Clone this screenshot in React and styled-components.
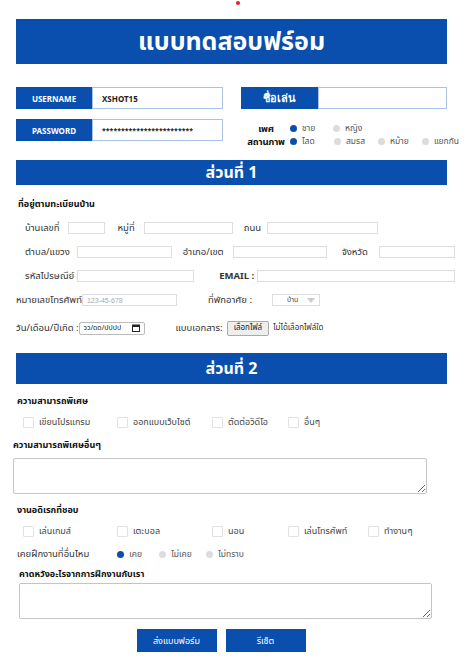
import React from 'react';
import styled, { createGlobalStyle } from 'styled-components';

const Global = createGlobalStyle`
  body {
    margin: 0;
    background: #fff;
    font-family: "Noto Sans Thai", "Noto Sans", "DejaVu Sans", sans-serif;
    color: #222;
  }
`;

const BLUE = '#0a4fae';

const Page = styled.div`
  width: 466px;
  padding: 1px 19px 0 16px;
  box-sizing: border-box;
  position: relative;
`;

const Dot = styled.span`
  position: absolute;
  left: 236px;
  top: 1px;
  width: 4px;
  height: 4px;
  border-radius: 50%;
  background: #d22;
`;

const Banner = styled.div`
  margin-top: ${({ $mt }) => $mt}px;
  height: ${({ $h }) => $h}px;
  background: ${BLUE};
  color: #fff;
  font-weight: 700;
  font-size: ${({ $fs }) => $fs}px;
  display: flex;
  align-items: center;
  justify-content: center;
`;

const Top = styled.div`
  display: grid;
  grid-template-columns: 207px 206px;
  column-gap: 18px;
  margin-top: 23px;
`;

const Col = styled.div`
  display: flex;
  flex-direction: column;
  gap: ${({ $gap }) => $gap}px;
`;

const Pair = styled.div`
  display: flex;
  height: 22px;
`;

const PairLabel = styled.div`
  width: ${({ $w }) => $w}px;
  flex: none;
  background: ${BLUE};
  color: #fff;
  font-family: "Noto Sans", sans-serif;
  font-weight: 700;
  font-size: ${({ $fs }) => $fs || 8}px;
  display: flex;
  align-items: center;
  justify-content: center;
`;

const PairInput = styled.div`
  flex: 1;
  border: 1px solid #a9c3e6;
  display: flex;
  align-items: center;
  padding-left: 9px;
  font-family: "Noto Sans", sans-serif;
  font-weight: 700;
  font-size: ${({ $fs }) => $fs || 8}px;
`;

const Choice = styled.div`
  display: flex;
  align-items: center;
  height: 13px;
  margin-top: ${({ $mt }) => $mt || 0}px;
`;

const ChoiceLabel = styled.div`
  width: 50px;
  flex: none;
  text-align: center;
  font-weight: 700;
  font-size: 9.5px;
  letter-spacing: -0.2px;
  color: #111;
`;

const RadioGroup = styled.div`
  display: flex;
  align-items: center;
  flex: none;
  margin-left: ${({ $ml }) => $ml || 0}px;
`;

const RadioItem = styled.div`
  display: flex;
  align-items: center;
  flex: none;
  gap: 5px;
  color: #555;
  font-size: 8.5px;
`;

const RadioDot = styled.span`
  width: 7px;
  height: 7px;
  border-radius: 50%;
  background: ${({ $on }) => ($on ? BLUE : '#dcdcdc')};
  flex: none;
`;

const Heading = styled.div`
  font-weight: 700;
  font-size: 9px;
  color: #111;
  margin: ${({ $m }) => $m};
`;

const Row = styled.div`
  display: flex;
  align-items: center;
  height: ${({ $h }) => $h || 24}px;
  padding-left: ${({ $pl }) => $pl || 0}px;
  box-sizing: border-box;
`;

const Label = styled.span`
  flex: none;
  margin-left: ${({ $ml }) => $ml || 0}px;
  font-size: 9.5px;
  color: #333;
  font-weight: ${({ $bold }) => ($bold ? 700 : 400)};
  white-space: nowrap;
`;

const Field = styled.div`
  flex: none;
  margin-left: ${({ $ml }) => $ml || 0}px;
  width: ${({ $w }) => $w}px;
  height: 12px;
  border: 1px solid #dedede;
  box-sizing: border-box;
  font-family: "Liberation Sans", sans-serif;
  font-size: 7px;
  color: #aaa;
  display: flex;
  align-items: center;
  padding-left: 4px;
`;

const Select = styled(Field)`
  justify-content: space-between;
  padding: 0 4px 0 14px;
  color: #444;
  font-family: inherit;
  &::after {
    content: '';
    border-left: 4px solid transparent;
    border-right: 4px solid transparent;
    border-top: 5px solid #ccc;
  }
`;

const DateBox = styled(Field)`
  height: 13px;
  border-color: #bbb;
  border-radius: 2px;
  color: #222;
  font-family: inherit;
  justify-content: space-between;
  padding: 0 4px;
`;

const FileBtn = styled.span`
  flex: none;
  margin-left: 4px;
  height: 15px;
  padding: 0 6px;
  border: 1px solid #aaa;
  border-radius: 2px;
  background: #eee;
  font-size: 8px;
  display: flex;
  align-items: center;
  box-sizing: border-box;
`;

const Note = styled.span`
  flex: none;
  margin-left: 4px;
  font-size: 8px;
  color: #333;
`;

const Checks = styled.div`
  display: flex;
  align-items: center;
  height: 20px;
  padding-left: 7px;
`;

const CheckItem = styled.div`
  width: ${({ $w }) => $w}px;
  flex: none;
  display: flex;
  align-items: center;
  gap: 5px;
  font-size: 9px;
  color: #444;
`;

const Box = styled.span`
  width: 9px;
  height: 9px;
  border: 1px solid #e2e2e2;
  border-radius: 1px;
  flex: none;
`;

const Area = styled.textarea`
  display: block;
  margin-left: ${({ $ml }) => $ml}px;
  width: ${({ $w }) => $w}px;
  height: 36px;
  border: 1px solid #c4c4c4;
  border-radius: 2px;
  box-sizing: border-box;
`;

const Buttons = styled.div`
  display: flex;
  justify-content: center;
  gap: 9px;
  margin-top: 10px;
  padding-right: 21px;
`;

const Button = styled.button`
  width: 80px;
  height: 23px;
  border: none;
  background: ${BLUE};
  color: #fff;
  font-family: inherit;
  font-size: 9px;
`;

function Calendar() {
  return (
    <svg width="8" height="8" viewBox="0 0 8 8">
      <rect x="0.5" y="1" width="7" height="6.5" fill="none" stroke="#222" strokeWidth="1" />
      <rect x="0.5" y="1" width="7" height="2" fill="#222" />
    </svg>
  );
}

function Radios({ items, on, widths, ml }) {
  return (
    <RadioGroup $ml={ml}>
      {items.map((t, i) => (
        <RadioItem key={t} style={{ width: widths[i] }}>
          <RadioDot $on={i === on} />
          {t}
        </RadioItem>
      ))}
    </RadioGroup>
  );
}

export default function App() {
  return (
    <Page>
      <Global />
      <Dot />
      <Banner $mt={18} $h={45} $fs={25}>แบบทดสอบฟร์อม</Banner>

      <Top>
        <Col $gap={10}>
          <Pair>
            <PairLabel $w={76}>USERNAME</PairLabel>
            <PairInput>XSHOT15</PairInput>
          </Pair>
          <Pair>
            <PairLabel $w={76}>PASSWORD</PairLabel>
            <PairInput $fs={7}>************************</PairInput>
          </Pair>
        </Col>
        <Col $gap={0}>
          <Pair>
            <PairLabel $w={77} $fs={11}>ชื่อเล่น</PairLabel>
            <PairInput />
          </Pair>
          <Choice $mt={13}>
            <ChoiceLabel>เพศ</ChoiceLabel>
            <Radios items={['ชาย', 'หญิง']} on={0} widths={[43, 44]} ml={-1} />
          </Choice>
          <Choice>
            <ChoiceLabel>สถานภาพ</ChoiceLabel>
            <Radios items={['โสด', 'สมรส', 'หม้าย', 'แยกกัน']} on={0} widths={[44, 44, 44, 44]} ml={-1} />
          </Choice>
        </Col>
      </Top>

      <Banner $mt={12} $h={25} $fs={16}>ส่วนที่ 1</Banner>
      <Heading $m="12px 0 5px 2px">ที่อยู่ตามทะเบียนบ้าน</Heading>

      <Row $pl={9}>
        <Label>บ้านเลขที่</Label>
        <Field $ml={8} $w={37} />
        <Label $ml={13}>หมู่ที่</Label>
        <Field $ml={9} $w={89} />
        <Label $ml={11}>ถนน</Label>
        <Field $ml={6} $w={111} />
      </Row>
      <Row $pl={9}>
        <Label>ตำบล/แขวง</Label>
        <Field $ml={7} $w={95} />
        <Label $ml={11}>อำเภอ/เขต</Label>
        <Field $ml={9} $w={94} />
        <Label $ml={15}>จังหวัด</Label>
        <Field $ml={11} $w={76} />
      </Row>
      <Row $pl={9}>
        <Label>รหัสไปรษณีย์</Label>
        <Field $ml={3} $w={117} />
        <Label $ml={25} $bold>EMAIL :</Label>
        <Field $ml={3} $w={198} />
      </Row>
      <Row $pl={-8}>
        <Label>หมายเลขโทรศัพท์</Label>
        <Field $ml={0} $w={95}>123-45-678</Field>
        <Label $ml={31}>ที่พักอาศัย :</Label>
        <Select $ml={20} $w={48}>บ้าน</Select>
      </Row>
      <Row $pl={-8} $h={32}>
        <Label>วัน/เดือน/ปีเกิด :</Label>
        <DateBox $ml={0} $w={66}>
          วว/ดด/ปปปป
          <Calendar />
        </DateBox>
        <Label $ml={31}>แบบเอกสาร:</Label>
        <FileBtn>เลือกไฟล์</FileBtn>
        <Note>ไม่ได้เลือกไฟล์ใด</Note>
      </Row>

      <Banner $mt={9} $h={31} $fs={16}>ส่วนที่ 2</Banner>
      <Heading $m="10px 0 4px 1px">ความสามารถพิเศษ</Heading>
      <Checks>
        <CheckItem $w={94}><Box />เขียนโปรแกรม</CheckItem>
        <CheckItem $w={95}><Box />ออกแบบเว็บไซต์</CheckItem>
        <CheckItem $w={76}><Box />ตัดต่อวิดีโอ</CheckItem>
        <CheckItem $w={60}><Box />อื่นๆ</CheckItem>
      </Checks>
      <Heading $m="6px 0 6px -3px">ความสามารถพิเศษอื่นๆ</Heading>
      <Area $ml={-3} $w={414} />
      <Heading $m="9px 0 4px 1px">งานอดิเรกที่ชอบ</Heading>
      <Checks>
        <CheckItem $w={94}><Box />เล่นเกมส์</CheckItem>
        <CheckItem $w={95}><Box />เตะบอล</CheckItem>
        <CheckItem $w={76}><Box />นอน</CheckItem>
        <CheckItem $w={80}><Box />เล่นโทรศัพท์</CheckItem>
        <CheckItem $w={60}><Box />ทำงานๆ</CheckItem>
      </Checks>
      <Row $h={26} $pl={1}>
        <Label>เคยฝึกงานที่อื่นไหม</Label>
        <Radios items={['เคย', 'ไม่เคย', 'ไม่ทราบ']} on={0} widths={[42, 47, 50]} ml={28} />
      </Row>
      <Heading $m="0 0 2px 3px">คาดหวังอะไรจากการฝึกงานกับเรา</Heading>
      <Area $ml={3} $w={413} />
      <Buttons>
        <Button>ส่งแบบฟอร์ม</Button>
        <Button>รีเซ็ต</Button>
      </Buttons>
    </Page>
  );
}
